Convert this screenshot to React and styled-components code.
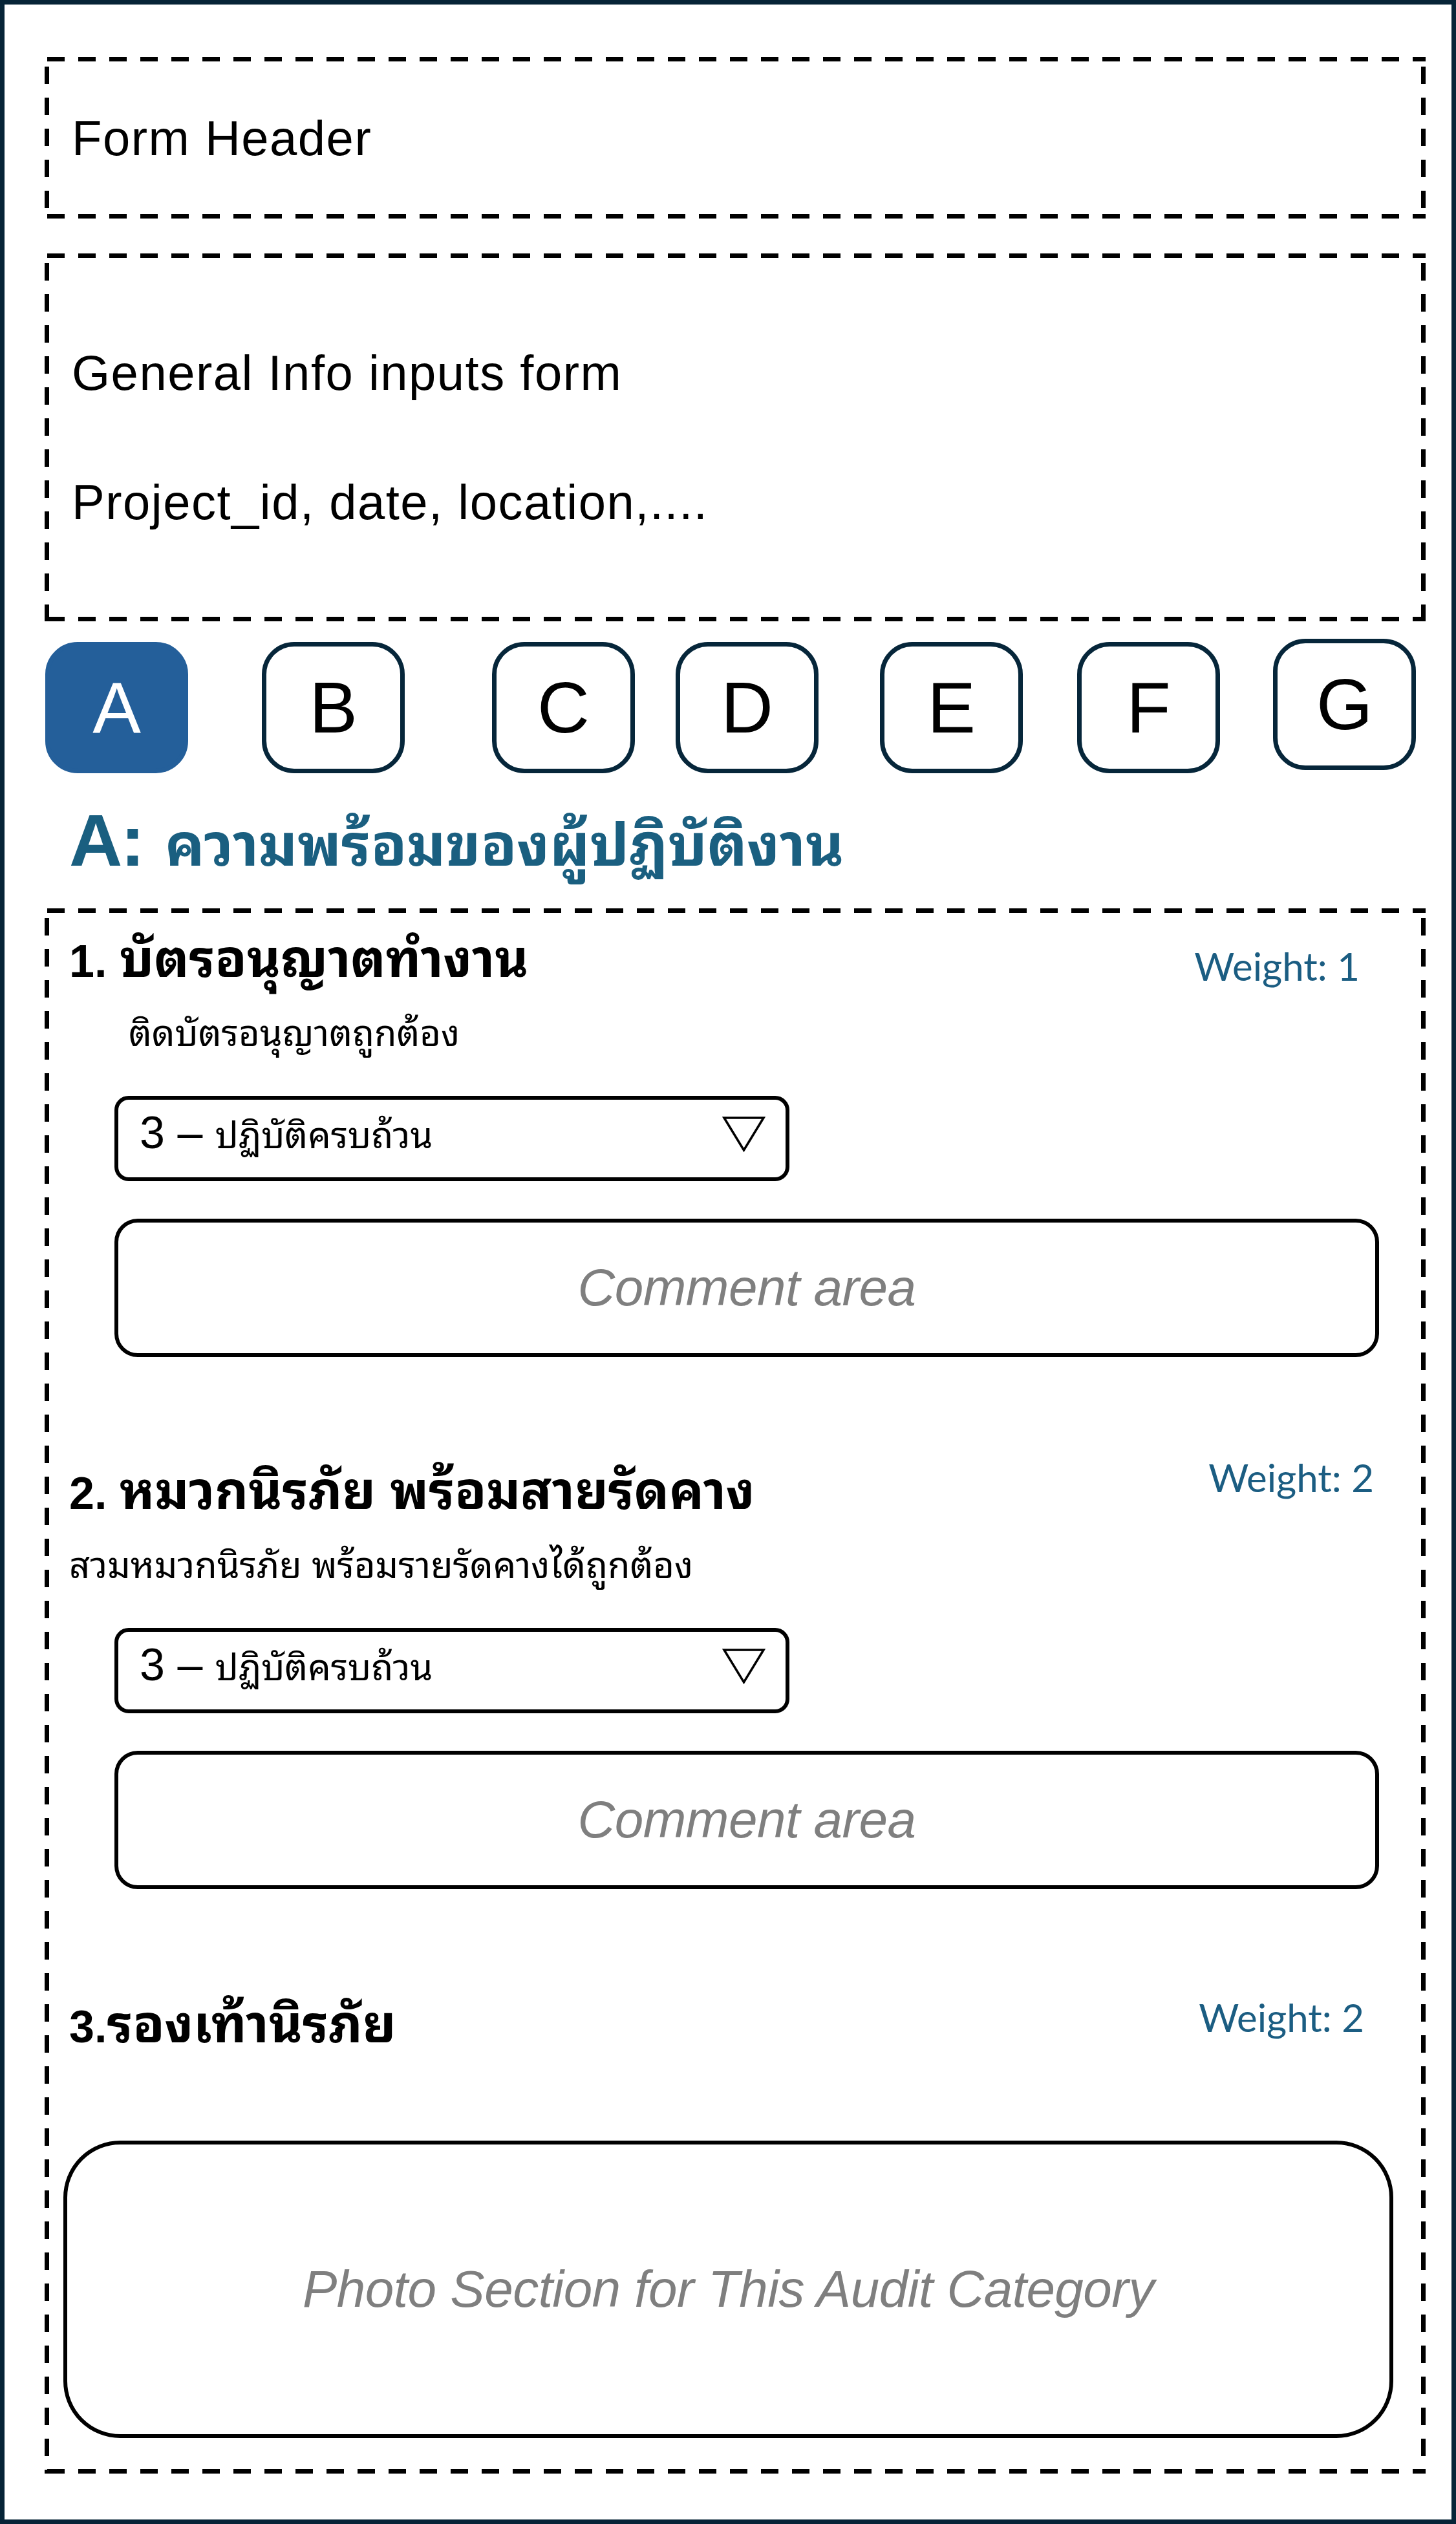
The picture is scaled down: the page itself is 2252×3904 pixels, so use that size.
import React from "react";
import styled, { createGlobalStyle, css } from "styled-components";

const GlobalStyle = createGlobalStyle`
  html, body {
    margin: 0;
    padding: 0;
    background: #fff;
  }
  * {
    box-sizing: border-box;
  }
`;

const thaiStack = `"Liberation Sans", "Noto Sans Thai Looped", "Noto Sans Thai", "Loma", "Garuda", "Waree", sans-serif`;

const dashed = css`
    background-image:
        repeating-linear-gradient(90deg, #000 0 27px, transparent 27px 48px),
        repeating-linear-gradient(90deg, #000 0 27px, transparent 27px 48px),
        repeating-linear-gradient(180deg, #000 0 27px, transparent 27px 48px),
        repeating-linear-gradient(180deg, #000 0 27px, transparent 27px 48px);
    background-size: 100% 7px, 100% 7px, 7px 100%, 7px 100%;
    background-position: 4px 0, 4px 100%, 0 15px, 100% 15px;
    background-repeat: no-repeat;
`;

const Page = styled.div`
    width: 2252px;
    height: 3904px;
    border: 7px solid #062437;
    padding: 81px 40px 71px 62px;
    display: flex;
    flex-direction: column;
    font-family: "Liberation Sans", Arial, sans-serif;
    color: #000;
    background: #fff;
`;

const HeaderBox = styled.div`
    ${dashed};
    height: 250px;
    display: flex;
    align-items: center;
    padding-left: 42px;
    font-size: 76px;
    letter-spacing: 1.5px;
`;

const InfoBox = styled.div`
    ${dashed};
    margin-top: 54px;
    height: 569px;
    padding: 85px 42px;
    font-size: 76px;
    line-height: 200px;
    letter-spacing: 1.5px;
`;

const Tabs = styled.div`
    margin-top: 32px;
    height: 203px;
    display: flex;
    align-items: flex-start;
`;

const Tab = styled.div`
    flex: none;
    width: 221px;
    height: 203px;
    margin-left: ${(p) => p.$offset}px;
    margin-top: ${(p) => p.$lift || 0}px;
    border-radius: 50px;
    border: 7px solid ${(p) => (p.$active ? "#245f9a" : "#06263a")};
    background: ${(p) => (p.$active ? "#245f9a" : "#fff")};
    color: ${(p) => (p.$active ? "#fff" : "#000")};
    display: flex;
    align-items: center;
    justify-content: center;
    font-size: 112px;
    line-height: 189px;
`;

const Heading = styled.h1`
    margin: 44px 0 0 38px;
    height: 120px;
    font-size: 114px;
    line-height: 120px;
    font-weight: 700;
    letter-spacing: -3px;
    color: #1a5f80;
    white-space: nowrap;
    font-family: ${thaiStack};
`;

const HeadingThai = styled.span`
    margin-left: 34px;
    font-size: 91px;
    letter-spacing: 0;
`;

const Section = styled.div`
    ${dashed};
    margin-top: 45px;
    flex: 1;
    padding: 39px 50px 0 29px;
    display: flex;
    flex-direction: column;
`;

const ItemHead = styled.div`
    margin-top: ${(p) => p.$gap || 0}px;
    height: 80px;
    display: flex;
    justify-content: space-between;
    align-items: flex-start;
`;

const ItemTitle = styled.h2`
    margin: 0 0 0 9px;
    font-family: ${thaiStack};
    font-size: 70px;
    line-height: 80px;
    font-weight: 700;
    white-space: nowrap;
`;

const TitleThai = styled.span`
    font-size: 80px;
`;

const Weight = styled.span`
    margin-top: ${(p) => p.$top}px;
    margin-right: ${(p) => p.$right}px;
    font-family: Lato, "Liberation Sans", sans-serif;
    font-size: 60px;
    line-height: 80px;
    color: #1b5d82;
    white-space: nowrap;
`;

const ItemDesc = styled.p`
    margin: 40px 0 0 ${(p) => p.$indent}px;
    font-family: ${thaiStack};
    font-size: 56px;
    line-height: 70px;
    white-space: nowrap;
`;

const Select = styled.div`
    margin: 61px 0 0 79px;
    width: 1044px;
    height: 132px;
    border: 6px solid #000;
    border-radius: 22px;
    padding: 11px 31px 0 33px;
    display: flex;
    align-items: flex-start;
    justify-content: space-between;
`;

const SelectValue = styled.span`
    font-family: ${thaiStack};
    font-size: 70px;
    line-height: 80px;
    white-space: nowrap;
`;

const SelectLabel = styled.span`
    font-size: 56px;
`;

const Arrow = styled.svg`
    margin-top: 14px;
    flex: none;
`;

const Comment = styled.div`
    margin: 58px 22px 0 79px;
    height: 214px;
    border: 6px solid #000;
    border-radius: 36px;
    display: flex;
    align-items: center;
    justify-content: center;
`;

const Placeholder = styled.span`
    font-size: 80px;
    font-style: italic;
    letter-spacing: -0.5px;
    color: #7f7f7f;
    white-space: nowrap;
`;

const Photo = styled.div`
    margin-top: 139px;
    height: 460px;
    border: 6px solid #000;
    border-radius: 88px;
    display: flex;
    align-items: center;
    justify-content: center;
`;

const tabs = [
    { key: "A", offset: 1, active: true },
    { key: "B", offset: 114 },
    { key: "C", offset: 135 },
    { key: "D", offset: 63 },
    { key: "E", offset: 95 },
    { key: "F", offset: 84 },
    { key: "G", offset: 82, lift: -5 },
];

const items = [
    {
        num: "1. ",
        title: "บัตรอนุญาตทำงาน",
        weight: "Weight: 1",
        wTop: 10,
        wRight: 52,
        desc: "ติดบัตรอนุญาตถูกต้อง",
        indent: 101,
        gap: 0,
    },
    {
        num: "2. ",
        title: "หมวกนิรภัย พร้อมสายรัดคาง",
        weight: "Weight: 2",
        wTop: -22,
        wRight: 30,
        desc: "สวมหมวกนิรภัย พร้อมรายรัดคางได้ถูกต้อง",
        indent: 9,
        gap: 168,
    },
];

const Dropdown = () => (
    <Select>
        <SelectValue>
            3 – <SelectLabel>ปฏิบัติครบถ้วน</SelectLabel>
        </SelectValue>
        <Arrow width="67" height="57" viewBox="0 0 67 57">
            <polygon
                points="3,3 64,3 33.5,53"
                fill="none"
                stroke="#000"
                strokeWidth="3.5"
            />
        </Arrow>
    </Select>
);

const AuditItem = ({ item }) => (
    <>
        <ItemHead $gap={item.gap}>
            <ItemTitle>
                {item.num}
                <TitleThai>{item.title}</TitleThai>
            </ItemTitle>
            <Weight $top={item.wTop} $right={item.wRight}>
                {item.weight}
            </Weight>
        </ItemHead>
        <ItemDesc $indent={item.indent}>{item.desc}</ItemDesc>
        <Dropdown />
        <Comment>
            <Placeholder>Comment area</Placeholder>
        </Comment>
    </>
);

const App = () => {
    return (
        <>
            <GlobalStyle />
            <Page>
                <HeaderBox>Form Header</HeaderBox>
                <InfoBox>
                    <div>General Info inputs form</div>
                    <div>Project_id, date, location,....</div>
                </InfoBox>
                <Tabs>
                    {tabs.map((t) => (
                        <Tab
                            key={t.key}
                            $offset={t.offset}
                            $lift={t.lift}
                            $active={t.active}
                        >
                            {t.key}
                        </Tab>
                    ))}
                </Tabs>
                <Heading>
                    A:<HeadingThai>ความพร้อมของผู้ปฏิบัติงาน</HeadingThai>
                </Heading>
                <Section>
                    {items.map((item) => (
                        <AuditItem key={item.num} item={item} />
                    ))}
                    <ItemHead $gap={170}>
                        <ItemTitle>
                            3.<TitleThai>รองเท้านิรภัย</TitleThai>
                        </ItemTitle>
                        <Weight $top={-12} $right={45}>
                            Weight: 2
                        </Weight>
                    </ItemHead>
                    <Photo>
                        <Placeholder>
                            Photo Section for This Audit Category
                        </Placeholder>
                    </Photo>
                </Section>
            </Page>
        </>
    );
};

export default App;
